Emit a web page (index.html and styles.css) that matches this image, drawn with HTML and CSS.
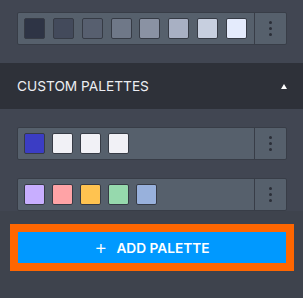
FILE: index.html
```html
<!DOCTYPE html>
<html lang="en">

<head>
    <meta charset="UTF-8">
    <meta name="viewport" content="width=device-width, initial-scale=1.0">
    <title>Palettes</title>
    <link rel="stylesheet" href="styles.css">
</head>

<body>
    <div class="panel">
        <!-- Default palette -->
        <div class="section">
            <div class="palette">
                <div class="swatches spread">
                    <span class="swatch" style="background:#2e3445"></span>
                    <span class="swatch" style="background:#434a5b"></span>
                    <span class="swatch" style="background:#575f6f"></span>
                    <span class="swatch" style="background:#6f7888"></span>
                    <span class="swatch" style="background:#8a92a3"></span>
                    <span class="swatch" style="background:#a8b0c3"></span>
                    <span class="swatch" style="background:#c7cfdf"></span>
                    <span class="swatch" style="background:#e4ebfc"></span>
                </div>
                <button class="menu"><i></i><i></i><i></i></button>
            </div>
        </div>

        <!-- Custom palettes header -->
        <div class="header">
            <span>CUSTOM PALETTES</span>
            <span class="caret"></span>
        </div>

        <div class="section custom">
            <div class="palette">
                <div class="swatches">
                    <span class="swatch" style="background:#3b3dc4"></span>
                    <span class="swatch" style="background:#f1f1f6"></span>
                    <span class="swatch" style="background:#f1f1f6"></span>
                    <span class="swatch" style="background:#f1f1f6"></span>
                </div>
                <button class="menu"><i></i><i></i><i></i></button>
            </div>
            <div class="palette">
                <div class="swatches">
                    <span class="swatch" style="background:#c8aeff"></span>
                    <span class="swatch" style="background:#ffa3a6"></span>
                    <span class="swatch" style="background:#ffc350"></span>
                    <span class="swatch" style="background:#96d9ad"></span>
                    <span class="swatch" style="background:#98b1dc"></span>
                </div>
                <button class="menu"><i></i><i></i><i></i></button>
            </div>
        </div>

        <!-- Footer -->
        <div class="footer">
            <div class="focus-ring">
                <button class="add-button"><span class="plus">+</span>ADD PALETTE</button>
            </div>
        </div>
    </div>
</body>

</html>
```

FILE: styles.css
```css
/* Basic Reset */
* {
    box-sizing: border-box;
    margin: 0;
    padding: 0;
    font-family: 'Inter', 'Lato', sans-serif;
}

body {
    background-color: #414652;
    color: #e8eaee;
    width: 303px;
    height: 298px;
    overflow: hidden;
}

.panel {
    display: flex;
    flex-direction: column;
    height: 298px;
}

/* Palette rows */
.section {
    padding: 12px 16px 18px 17px;
}

.section.custom {
    padding-top: 18px;
    padding-bottom: 0;
    display: flex;
    flex-direction: column;
    gap: 18px;
}

.palette {
    display: flex;
    height: 33px;
    background: #56606c;
    border: 1px solid #383d47;
    border-radius: 2px;
}

.swatches {
    flex: 1;
    display: flex;
    align-items: center;
    gap: 7px;
    padding: 0 7px 0 6px;
    border-right: 1px solid #383d47;
}

.swatches.spread {
    justify-content: space-between;
    gap: 0;
}

.swatch {
    width: 21px;
    height: 21px;
    border: 1px solid #363b45;
    border-radius: 2px;
}

/* Kebab menu */
.menu {
    width: 31px;
    background: none;
    border: none;
    display: flex;
    flex-direction: column;
    align-items: center;
    justify-content: center;
    gap: 3px;
    cursor: pointer;
}

.menu i {
    width: 3px;
    height: 3px;
    border-radius: 50%;
    background: #2a2e37;
}

/* Section header */
.header {
    height: 46px;
    background: #2e3139;
    display: flex;
    align-items: center;
    justify-content: space-between;
    padding: 0 16px 0 17px;
    font-size: 13.7px;
    color: #eceef2;
}

.caret {
    width: 0;
    height: 0;
    border-left: 3.5px solid transparent;
    border-right: 3.5px solid transparent;
    border-bottom: 5px solid #ffffff;
}

/* Footer */
.footer {
    margin-top: auto;
    height: 87px;
    background: #3e434d;
    padding: 13px 9px 0 10px;
}

.focus-ring {
    border: 8px solid #ff6600;
}

.add-button {
    width: 100%;
    height: 31px;
    background: #0099ff;
    border: none;
    color: #ffffff;
    font-size: 13.7px;
    font-weight: 600;
    display: flex;
    align-items: center;
    justify-content: center;
    cursor: pointer;
}

.plus {
    font-size: 20px;
    font-weight: 300;
    line-height: 1;
    margin-right: 9px;
    position: relative;
    top: -1px;
}
```
